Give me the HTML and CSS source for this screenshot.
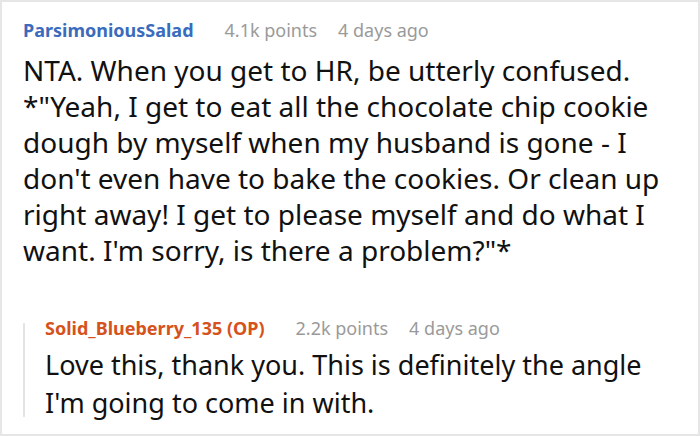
FILE: index.html
```html
<!DOCTYPE html>
<html>
<head>
<meta charset="utf-8">
<link rel="stylesheet" href="styles.css">
</head>
<body>
<div class="frame">
  <div class="comment">
    <div class="meta">
      <span class="author">ParsimoniousSalad</span>
      <span class="info">4.1k points</span>
      <span class="info">4 days ago</span>
    </div>
    <p class="text">NTA. When you get to HR, be utterly confused. *"Yeah, I get to eat all the chocolate chip cookie dough by myself when my husband is gone - I don't even have to bake the cookies. Or clean up right away! I get to please myself and do what I want. I'm sorry, is there a problem?"*</p>
    <div class="reply">
      <div class="meta reply-meta">
        <span class="author op">Solid_Blueberry_135 (OP)</span>
        <span class="info">2.2k points</span>
        <span class="info">4 days ago</span>
      </div>
      <p class="text reply-text">Love this, thank you. This is definitely the angle I'm going to come in with.</p>
    </div>
  </div>
</div>
</body>
</html>
```

FILE: styles.css
```css
html, body {
  margin: 0;
  padding: 0;
  background: #fff;
}
.frame {
  width: 700px;
  height: 436px;
  box-sizing: border-box;
  border: 2px solid #e6e6e6;
  font-family: "Noto Sans", sans-serif;
  color: #111;
  overflow: hidden;
}
.comment {
  padding: 17px 20px 0 21px;
}
.meta {
  display: flex;
  align-items: baseline;
  font-size: 18px;
  line-height: 22px;
}
.author {
  font-weight: 700;
  color: #3a6bbd;
  margin-right: 31px;
}
.author.op {
  color: #d5521c;
  margin-right: 31px;
}
.info {
  color: #9a9a9a;
  margin-right: 21px;
}
.text {
  margin: 11px 0 0 0;
  font-size: 28px;
  line-height: 36px;
}
.reply {
  display: flex;
  flex-direction: column;
  margin-top: 55px;
  border-left: 2px solid #e4e4e4;
  padding-left: 20px;
}
.reply-meta {
  margin-top: -6px;
}
.reply-text {
  margin: 7px 0 -5px 0;
  font-size: 27px;
  line-height: 38px;
}
```
